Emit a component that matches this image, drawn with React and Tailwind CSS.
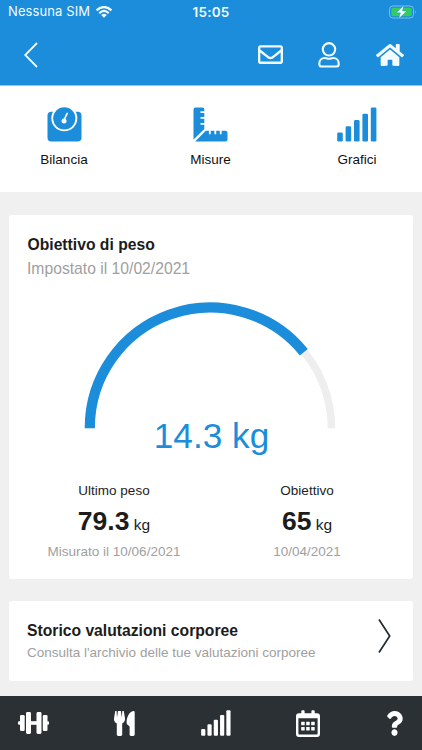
import React from 'react';
import { FaRegEnvelope, FaHome, FaQuestion } from 'react-icons/fa';

function Wifi() {
  return (
    <svg className="ml-[5px] h-3 w-[18px]" viewBox="0 0 18 12" fill="none" stroke="#f2fbff" strokeWidth="2.2">
      <path d="M1.5 4.3 Q9 -2.2 16.5 4.3" />
      <path d="M4.2 7.1 Q9 2.7 13.8 7.1" />
      <path d="M9 11.7 L6.2 8.9 Q9 6.6 11.8 8.9Z" fill="#f2fbff" stroke="none" />
    </svg>
  );
}

function Battery() {
  return (
    <svg className="h-[14px] w-7" viewBox="0 0 28 14">
      <rect x="0.5" y="1" width="24" height="12" rx="3.5" fill="none" stroke="#7fbde9" />
      <rect x="2.3" y="2.8" width="20.4" height="8.4" rx="2" fill="#33cc5f" />
      <path d="M26 5 Q27.5 7 26 9Z" fill="#7fbde9" />
      <path d="M14.8 0.4 L7.4 7.8 H11.5 L9.8 13.6 L17.7 6.1 H13.4Z" fill="#fff" stroke="#1b8ddb" strokeWidth="0.4" />
    </svg>
  );
}

function Person() {
  return (
    <svg className="h-[26px] w-6" viewBox="0 0 24 26" fill="none" stroke="#f2fbff" strokeWidth="2.1">
      <circle cx="12" cy="7.3" r="6.2" />
      <path d="M8 16 C9.8 16 10.3 16.8 12 16.8 S14.2 16 16 16 C19.8 16 21.7 18.5 21.7 21.5 V22.3 Q21.7 24.5 19.5 24.5 H4.5 Q2.3 24.5 2.3 22.3 V21.5 C2.3 18.5 4.2 16 8 16Z" />
    </svg>
  );
}

function Scale() {
  return (
    <svg className="h-[35px] w-[35px]" viewBox="0 0 35 35">
      <rect x="0.5" y="4.7" width="34" height="29.8" rx="3.8" fill="#1b8ddb" />
      <circle cx="17.3" cy="11.3" r="13" fill="#fff" />
      <circle cx="17.3" cy="11.3" r="11.1" fill="#1b8ddb" />
      <circle cx="17" cy="14" r="2.5" fill="#fff" />
      <path d="M17 13 L20.2 6.4" stroke="#fff" strokeWidth="1.6" strokeLinecap="round" />
    </svg>
  );
}

function Rulers() {
  return (
    <svg className="h-[35px] w-[35px]" viewBox="0 0 35 35">
      <path d="M2.5 0.5 H9.5 Q11.3 0.5 11.3 2.3 V4.2 H7.5 V6 H11.3 V10 H7.5 V11.8 H11.3 V16 H7.5 V17.8 H11.3 V22 L0.5 32.6 V2.5 Q0.5 0.5 2.5 0.5Z" fill="#1b8ddb" />
      <path d="M12.8 23.7 H15.9 V27.3 H17.7 V23.7 H21.4 V27.3 H23.2 V23.7 H26.8 V27.3 H28.6 V23.7 H32.5 Q34.5 23.7 34.5 25.7 V32.5 Q34.5 34.5 32.5 34.5 H2.1Z" fill="#1b8ddb" />
    </svg>
  );
}

function Bars({ className }) {
  return (
    <svg className={className} viewBox="0 0 40 35" preserveAspectRatio="none" fill="currentColor">
      <rect x="0.2" y="25.6" width="5.6" height="9" rx="1.4" />
      <rect x="8.6" y="19.3" width="5.6" height="15.3" rx="1.4" />
      <rect x="17" y="13" width="5.6" height="21.6" rx="1.4" />
      <rect x="25.4" y="6.7" width="5.6" height="27.9" rx="1.4" />
      <rect x="33.8" y="0.4" width="5.6" height="34.2" rx="1.4" />
    </svg>
  );
}

function Dumbbell() {
  return (
    <svg className="h-[22px] w-[31px]" viewBox="0 0 31 22" fill="#fff">
      <rect x="0" y="9.2" width="3" height="3.6" rx="1" />
      <rect x="2" y="3" width="4.7" height="16" rx="1.3" />
      <rect x="8" y="0" width="5" height="22" rx="1.4" />
      <rect x="12" y="9.2" width="7" height="3.6" />
      <rect x="18.5" y="0" width="5" height="22" rx="1.4" />
      <rect x="24.8" y="3" width="4.7" height="16" rx="1.3" />
      <rect x="28.5" y="9.2" width="2.5" height="3.6" rx="1" />
    </svg>
  );
}

function Cutlery() {
  return (
    <svg className="h-[25px] w-[21px]" viewBox="0 0 21 25" fill="#fff">
      <path d="M1.2 0 H2.6 L3 6.5 L4 0 H6.9 L7.8 6.5 L8.3 0 H9.8 L11 7.5 C11.2 10 10 11.8 8.2 12.5 V23.6 Q8.2 25 6.8 25 H4.2 Q2.8 25 2.8 23.6 V12.5 C1 11.8 -0.2 10 0 7.5Z" />
      <path d="M19.4 0 Q20.7 0 20.7 1.3 V23.6 Q20.7 25 19.3 25 H17 Q15.6 25 15.6 23.6 V15.5 L12.8 13 C12 7 15 0.5 19.4 0Z" />
    </svg>
  );
}

function Calendar() {
  return (
    <svg className="h-[27px] w-6" viewBox="0 0 24 27">
      <path fillRule="evenodd" fill="#fff" d="M3 3.2 H5.3 V1.2 Q5.3 0.2 6.3 0.2 H7.6 Q8.6 0.2 8.6 1.2 V3.2 H15.4 V1.2 Q15.4 0.2 16.4 0.2 H17.7 Q18.7 0.2 18.7 1.2 V3.2 H21 Q24 3.2 24 6.2 V24 Q24 27 21 27 H3 Q0 27 0 24 V6.2 Q0 3.2 3 3.2Z M2.4 8.3 V23.6 Q2.4 24.6 3.4 24.6 H20.6 Q21.6 24.6 21.6 23.6 V8.3Z" />
      <g fill="#fff">
        <rect x="5.2" y="11.8" width="3.5" height="3.5" rx="0.5" />
        <rect x="10.2" y="11.8" width="3.5" height="3.5" rx="0.5" />
        <rect x="15.2" y="11.8" width="3.5" height="3.5" rx="0.5" />
        <rect x="5.2" y="17" width="3.5" height="3.5" rx="0.5" />
        <rect x="10.2" y="17" width="3.5" height="3.5" rx="0.5" />
        <rect x="15.2" y="17" width="3.5" height="3.5" rx="0.5" />
      </g>
    </svg>
  );
}

function Gauge() {
  return (
    <svg className="-ml-[2px] h-[127px] w-[252px]" viewBox="0 0 252 127" fill="none">
      <path d="M5.5 126.3 A121 121 0 0 1 247.5 126.3" stroke="#eeeeee" strokeWidth="7.5" />
      <path d="M5.8 126.3 A120.4 120.4 0 0 1 219.8 50.2" stroke="#1b8ddb" strokeWidth="10.2" />
    </svg>
  );
}

function Shortcut({ label, children }) {
  return (
    <button className="flex w-[100px] flex-col items-center text-[13.5px] leading-4 text-[#111]">
      {children}
      <span className="mt-[10px]">{label}</span>
    </button>
  );
}

function Weight({ label, value, note, className }) {
  return (
    <div className={'flex flex-col items-center whitespace-nowrap ' + className}>
      <span className="text-[13.5px] leading-4 text-[#222]">{label}</span>
      <span className="mt-[6px] h-8 text-[15.5px] leading-8 text-[#1c1c1c]">
        <b className="text-[26.5px]">{value}</b> kg
      </span>
      <span className="mt-[7px] text-[13.5px] leading-4 text-[#a0a0a0]">{note}</span>
    </div>
  );
}

export default function App() {
  return (
    <div className="flex h-[750px] w-[422px] flex-col overflow-hidden bg-[#f0f0f0] font-['Liberation_Sans',Arial,sans-serif]">
      <header className="h-[86px] shrink-0 border-b border-[#8fc6ec] bg-[#1b8ddb] text-[#f2fbff]">
        <div className="grid h-6 grid-cols-3 items-center pl-2 pr-[5px] font-[Inter,sans-serif]">
          <div className="flex items-center whitespace-nowrap text-[13px] tracking-[0.1px]">
            <span>Nessuna SIM</span>
            <Wifi />
          </div>
          <span className="pr-[3px] text-center text-[13.5px] font-semibold tracking-[0.2px]">15:05</span>
          <div className="flex justify-end"><Battery /></div>
        </div>
        <nav className="flex h-[61px] items-center pl-6 pr-[18px]">
          <svg className="h-[26px] w-[14px]" viewBox="0 0 14 26" fill="none" stroke="#f2fbff" strokeWidth="1.8"><path d="M13 1 L1.2 13 L13 25" /></svg>
          <div className="ml-auto flex items-center">
            <FaRegEnvelope className="h-[25px] w-[25px]" />
            <div className="ml-[34px]"><Person /></div>
            <FaHome className="ml-[35px] h-[28px] w-[28px]" />
          </div>
        </nav>
      </header>

      <section className="flex h-[106px] shrink-0 justify-between bg-white pl-[14px] pr-[15px] pt-[21px]">
        <Shortcut label="Bilancia"><Scale /></Shortcut>
        <Shortcut label="Misure"><Rulers /></Shortcut>
        <Shortcut label="Grafici"><Bars className="h-[35px] w-10 text-[#1b8ddb]" /></Shortcut>
      </section>

      <section className="mx-[9px] mt-[23px] h-[364px] shrink-0 rounded-[3px] bg-white pt-5">
        <h2 className="pl-[18.5px] text-[15.7px] font-bold leading-5 text-[#1c1c1c]">Obiettivo di peso</h2>
        <p className="mt-1 pl-[18px] text-[15.7px] leading-5 text-[#a0a0a0]">Impostato il 10/02/2021</p>
        <div className="mt-[23px] flex flex-col items-center">
          <Gauge />
          <span className="-mt-[14px] ml-[1px] text-[35.2px] leading-[42px] text-[#1b8ddb]">14.3 kg</span>
        </div>
        <div className="mt-[26px] flex pl-[15px]">
          <Weight className="w-[180px]" label="Ultimo peso" value="79.3" note="Misurato il 10/06/2021" />
          <Weight className="ml-[26px] w-[154px]" label="Obiettivo" value="65" note="10/04/2021" />
        </div>
      </section>

      <section className="mx-[9px] mt-[22px] flex h-20 shrink-0 items-center justify-between rounded-[3px] bg-white pl-[18px] pr-[22px]">
        <div className="pt-px">
          <h2 className="text-[15.7px] font-bold leading-5 text-[#1c1c1c]">Storico valutazioni corporee</h2>
          <p className="mt-[3px] text-[13.5px] leading-[18px] text-[#a0a0a0]">Consulta l'archivio delle tue valutazioni corporee</p>
        </div>
        <svg className="-mt-[10px] h-[34px] w-[13px]" viewBox="0 0 13 34" fill="none" stroke="#222b30" strokeWidth="1.7"><path d="M1 0.5 L11.7 17 L1 33.5" /></svg>
      </section>

      <footer className="mt-auto flex h-[54px] shrink-0 items-center bg-[#2b3035] pl-[18px] text-white">
        <Dumbbell />
        <div className="ml-[65px]"><Cutlery /></div>
        <Bars className="ml-[66px] h-[26px] w-[30px]" />
        <div className="ml-[65px]"><Calendar /></div>
        <FaQuestion className="ml-[66px] h-[25px] w-[17px]" preserveAspectRatio="none" />
      </footer>
    </div>
  );
}
